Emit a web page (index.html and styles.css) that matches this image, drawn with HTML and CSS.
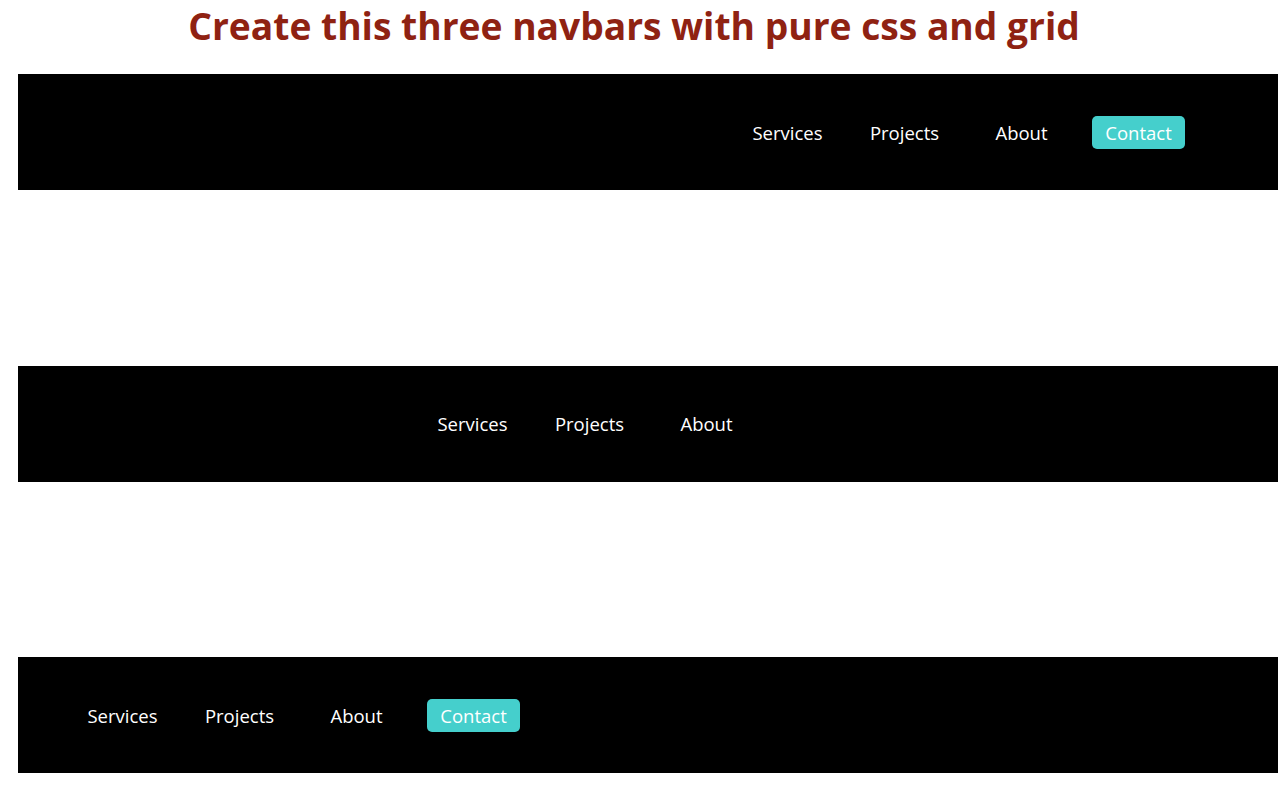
FILE: index.html
```html
<!DOCTYPE html>
<html lang="en">
<head>
<meta charset="utf-8">
<title>Navbars</title>
<link rel="stylesheet" href="styles.css">
</head>
<body>
<h1 class="title">Create this three navbars with pure css and grid</h1>
<div class="bars">
  <nav class="bar bar-right">
    <a class="item" href="#">Services</a>
    <a class="item" href="#">Projects</a>
    <a class="item" href="#">About</a>
    <a class="item"><span class="btn">Contact</span></a>
  </nav>
  <nav class="bar bar-center">
    <a class="item" href="#">Services</a>
    <a class="item" href="#">Projects</a>
    <a class="item" href="#">About</a>
    <a class="item hidden"><span class="btn">Contact</span></a>
  </nav>
  <nav class="bar bar-left">
    <a class="item" href="#">Services</a>
    <a class="item" href="#">Projects</a>
    <a class="item" href="#">About</a>
    <a class="item"><span class="btn">Contact</span></a>
  </nav>
</div>
</body>
</html>
```
FILE: styles.css
```css
* { box-sizing: border-box; }
body {
  margin: 0;
  background: #fff;
  font-family: "Open Sans", "Liberation Sans", sans-serif;
}
.title {
  margin: 0;
  height: 74px;
  padding: 3px 12px 0 0;
  text-align: center;
  font-size: 37.2px;
  font-weight: 700;
  line-height: 46px;
  color: #8f2212;
}
.bars {
  display: flex;
  flex-direction: column;
  gap: 175.5px;
  margin: 0 2px 0 18px;
}
.bar {
  height: 116px;
  background: #000;
  display: grid;
  grid-template-columns: repeat(4, 117px);
  align-items: center;
}
.bar-right { justify-content: end; padding-right: 81px; }
.bar-center { justify-content: center; }
.bar-left { justify-content: start; padding-left: 46px; }
.item {
  color: #fff;
  text-decoration: none;
  font-size: 18.5px;
  text-align: center;
}
.btn {
  display: inline-block;
  background: #45cfcc;
  border-radius: 5px;
  padding: 0 13px;
  line-height: 33px;
}
.hidden { visibility: hidden; }
```
